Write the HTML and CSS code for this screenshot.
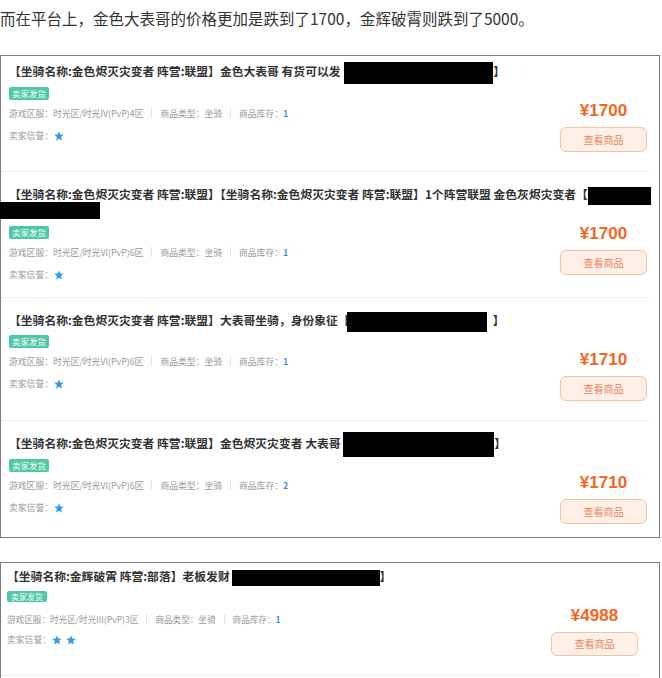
FILE: index.html
```html
<!DOCTYPE html>
<html lang="zh-CN">

<head>
    <meta charset="UTF-8" />
    <meta name="viewport" content="width=device-width, initial-scale=1" />
    <title>金色大表哥 价格</title>
    <link rel="stylesheet" href="styles.css">
</head>

<body>
    <p class="intro">而在平台上，金色大表哥的价格更加是跌到了1700，金辉破霄则跌到了5000。</p>

    <!-- first screenshot: 金色烬灭灾变者 listings -->
    <div class="shot">
        <div class="item item-cut">
            <div class="info">
                <div class="title">【坐骑名称:金色烬灭灾变者 阵营:联盟】金色大表哥 有货可以发【<span class="mask mask-1"></span>】</div>
                <span class="badge">卖家发货</span>
                <div class="meta">游戏区服：时光区/时光IV(PvP)4区<i class="sep"></i>商品类型：坐骑<i class="sep"></i>商品库存：<b>1</b></div>
                <div class="rep">卖家信誉：<svg viewBox="0 0 10 10"><polygon points="5,0.4 6.3,3.5 9.7,3.8 7.1,6 7.9,9.5 5,7.7 2.1,9.5 2.9,6 0.3,3.8 3.7,3.5" /></svg></div>
            </div>
            <div class="buy">
                <div class="price">¥1700</div>
                <a class="btn" href="#">查看商品</a>
            </div>
        </div>

        <div class="item">
            <div class="info">
                <div class="title">【坐骑名称:金色烬灭灾变者 阵营:联盟】【坐骑名称:金色烬灭灾变者 阵营:联盟】1个阵营联盟 金色灰烬灾变者【<span class="mask mask-2a"></span><br><span class="mask mask-2b"></span></div>
                <span class="badge">卖家发货</span>
                <div class="meta">游戏区服：时光区/时光VI(PvP)6区<i class="sep"></i>商品类型：坐骑<i class="sep"></i>商品库存：<b>1</b></div>
                <div class="rep">卖家信誉：<svg viewBox="0 0 10 10"><polygon points="5,0.4 6.3,3.5 9.7,3.8 7.1,6 7.9,9.5 5,7.7 2.1,9.5 2.9,6 0.3,3.8 3.7,3.5" /></svg></div>
            </div>
            <div class="buy">
                <div class="price">¥1700</div>
                <a class="btn" href="#">查看商品</a>
            </div>
        </div>

        <div class="item">
            <div class="info">
                <div class="title">【坐骑名称:金色烬灭灾变者 阵营:联盟】大表哥坐骑，身份象征【<span class="mask mask-3"></span>】</div>
                <span class="badge">卖家发货</span>
                <div class="meta">游戏区服：时光区/时光VI(PvP)6区<i class="sep"></i>商品类型：坐骑<i class="sep"></i>商品库存：<b>1</b></div>
                <div class="rep">卖家信誉：<svg viewBox="0 0 10 10"><polygon points="5,0.4 6.3,3.5 9.7,3.8 7.1,6 7.9,9.5 5,7.7 2.1,9.5 2.9,6 0.3,3.8 3.7,3.5" /></svg></div>
            </div>
            <div class="buy">
                <div class="price">¥1710</div>
                <a class="btn" href="#">查看商品</a>
            </div>
        </div>

        <div class="item item-end">
            <div class="info">
                <div class="title">【坐骑名称:金色烬灭灾变者 阵营:联盟】金色烬灭灾变者 大表哥 <span class="mask mask-4"></span>】</div>
                <span class="badge">卖家发货</span>
                <div class="meta">游戏区服：时光区/时光VI(PvP)6区<i class="sep"></i>商品类型：坐骑<i class="sep"></i>商品库存：<b>2</b></div>
                <div class="rep">卖家信誉：<svg viewBox="0 0 10 10"><polygon points="5,0.4 6.3,3.5 9.7,3.8 7.1,6 7.9,9.5 5,7.7 2.1,9.5 2.9,6 0.3,3.8 3.7,3.5" /></svg></div>
            </div>
            <div class="buy">
                <div class="price">¥1710</div>
                <a class="btn" href="#">查看商品</a>
            </div>
        </div>
    </div>

    <!-- second screenshot: 金辉破霄 -->
    <div class="shot shot-b">
        <div class="item">
            <div class="info">
                <div class="title">【坐骑名称:金辉破霄 阵营:部落】老板发财【<span class="mask mask-5"></span>】</div>
                <span class="badge">卖家发货</span>
                <div class="meta">游戏区服：时光区/时光III(PvP)3区<i class="sep"></i>商品类型：坐骑<i class="sep"></i>商品库存：<b>1</b></div>
                <div class="rep">卖家信誉：<svg viewBox="0 0 10 10"><polygon points="5,0.4 6.3,3.5 9.7,3.8 7.1,6 7.9,9.5 5,7.7 2.1,9.5 2.9,6 0.3,3.8 3.7,3.5" /></svg><svg viewBox="0 0 10 10"><polygon points="5,0.4 6.3,3.5 9.7,3.8 7.1,6 7.9,9.5 5,7.7 2.1,9.5 2.9,6 0.3,3.8 3.7,3.5" /></svg></div>
            </div>
            <div class="buy">
                <div class="price">¥4988</div>
                <a class="btn" href="#">查看商品</a>
            </div>
        </div>
    </div>
</body>

</html>
```

FILE: styles.css
```css
:root {
    --text: #333;
    --muted: #999;
    --line: #f0f0f0;
    --frame: #7b7b7b;
    --green: #4ec8a6;
    --blue: #3a8fe2;
    --orange: #f4661f;
}

body {
    margin: 0;
    font-family: "Noto Sans CJK SC", sans-serif;
    color: var(--text);
    background: #fff;
}

.intro {
    margin: 0 0 25px;
    padding-top: 6px;
    font-size: 15.5px;
    line-height: 24px;
}

.shot {
    width: 658px;
    border: 1px solid var(--frame);
}

.shot + .shot {
    margin-top: 24px;
}

.item {
    display: flex;
    align-items: flex-start;
    margin-right: 9px;
    padding: 13px 3px 16px 8px;
    border-bottom: 1px solid var(--line);
}

.item-cut {
    padding-top: 6px;
}

.item-end {
    padding-bottom: 10px;
    border-bottom: none;
}

.info {
    flex: 1;
    min-width: 0;
}

.title {
    margin-right: -97px;
    font-size: 11.8px;
    line-height: 17px;
    font-weight: bold;
}

.mask {
    display: inline-block;
    background: #000;
    vertical-align: middle;
}

.mask-1 {
    width: 149px;
    height: 22px;
    margin: -4px 0 -4px -8px;
}

.mask-2a {
    width: 63px;
    height: 18px;
    margin: -3px 0 -3px 0;
}

.mask-2b {
    width: 100px;
    height: 17px;
    margin-left: -9px;
    vertical-align: top;
}

.mask-3 {
    width: 140px;
    height: 20px;
    margin: -4px 6px -4px -3px;
}

.mask-4 {
    width: 151px;
    height: 25px;
    margin: -5px 0 -5px 0;
}

.mask-5 {
    width: 148px;
    height: 16px;
    margin: -2px 0 -2px -10px;
}

.badge {
    display: block;
    width: max-content;
    margin-top: 7px;
    padding: 0 3px;
    height: 13px;
    line-height: 13px;
    font-size: 8.5px;
    color: #fff;
    background: var(--green);
    border-radius: 2px;
}

.meta {
    margin-top: 8px;
    font-size: 8.8px;
    line-height: 12px;
    color: var(--muted);
    white-space: nowrap;
}

.meta b {
    color: var(--blue);
}

.sep {
    display: inline-block;
    width: 1px;
    height: 10px;
    margin: 0 8px;
    background: #e2e2e2;
    vertical-align: -1px;
}

.rep {
    display: flex;
    align-items: center;
    margin-top: 10px;
    font-size: 8.8px;
    line-height: 12px;
    color: var(--muted);
}

.rep svg {
    width: 10px;
    height: 10px;
    margin-left: 1px;
    margin-right: 4px;
    fill: #2f9af0;
}

.buy {
    flex: none;
    width: 87px;
    margin-top: 39px;
    margin-bottom: 3px;
    text-align: center;
}

.price {
    font-family: "Liberation Sans", sans-serif;
    font-size: 17px;
    line-height: 20px;
    font-weight: bold;
    color: var(--orange);
}

.btn {
    display: block;
    box-sizing: border-box;
    height: 25px;
    margin-top: 6px;
    border: 1px solid #f5c3a1;
    border-radius: 6px;
    background: #fef0e6;
    color: #e8845a;
    font-size: 10px;
    line-height: 23px;
    text-decoration: none;
}

/* second screenshot is a little smaller */
.shot-b {
    padding-bottom: 20px;
}

.shot-b .item {
    margin-right: 19px;
    padding: 5px 2px 16px 6px;
}

.shot-b .title {
    font-size: 11.8px;
    line-height: 16px;
}

.shot-b .badge {
    height: 11px;
    line-height: 11px;
    padding: 0 4px;
    font-size: 8px;
}

.shot-b .meta {
    margin-top: 11px;
    font-size: 8.6px;
}

.shot-b .rep {
    margin-top: 9px;
}

.shot-b .rep svg {
    margin-right: 3px;
}

.shot-b .buy {
    margin-top: 38px;
}

.shot-b .btn {
    height: 24px;
    line-height: 22px;
}
```
